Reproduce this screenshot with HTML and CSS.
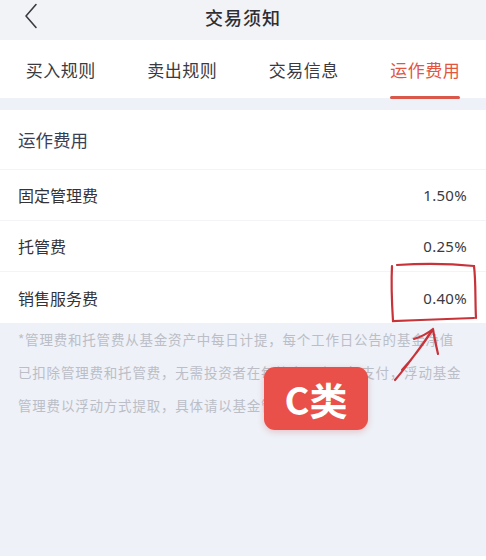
FILE: index.html
```html
<!DOCTYPE html>
<html lang="zh">
<head>
<meta charset="utf-8">
<link rel="stylesheet" href="styles.css">
</head>
<body>
<div class="page">
  <header class="nav">
    <span class="back">
      <svg width="14" height="26" viewBox="0 0 14 26"><path d="M12 1.5 L2 13 L12 24.5" fill="none" stroke="#3a3a40" stroke-width="1.6" stroke-linecap="round" stroke-linejoin="round"/></svg>
    </span>
    <h1 class="title">交易须知</h1>
    <span></span>
  </header>
  <nav class="tabs">
    <div class="tab">买入规则</div>
    <div class="tab">卖出规则</div>
    <div class="tab">交易信息</div>
    <div class="tab active">运作费用</div>
  </nav>
  <section class="card">
    <div class="card-head">运作费用</div>
    <div class="row"><span>固定管理费</span><span class="val">1.50%</span></div>
    <div class="row"><span>托管费</span><span class="val">0.25%</span></div>
    <div class="row"><span>销售服务费</span><span class="val">0.40%</span></div>
  </section>
  <p class="note">*管理费和托管费从基金资产中每日计提，每个工作日公告的基金净值已扣除管理费和托管费，无需投资者在每笔交易中另行支付，浮动基金管理费以浮动方式提取，具体请以基金管理人公告为准。</p>
  <div class="bottom"></div>

  <svg class="mark" width="486" height="560" viewBox="0 0 486 560">
    <path d="M392 266 C391 285 392 305 393 321 C420 320 450 319 474 318 M397 265 C425 263 455 264 474 266 C476 282 475 300 476 318" fill="none" stroke="#c8333a" stroke-width="2.2" stroke-linecap="round"/>
    <path d="M395 380 C408 365 422 345 433 329 M402 370 C414 357 424 343 432 331 M433 329 C428 333 421 337 414 339 M433 329 C434 336 436 345 438 354" fill="none" stroke="#c8333a" stroke-width="2.2" stroke-linecap="round"/>
  </svg>
  <div class="badge">C类</div>
</div>
</body>
</html>
```
FILE: styles.css
```css
* { box-sizing: border-box; }
html, body { margin: 0; padding: 0; }
body {
  width: 486px;
  height: 560px;
  overflow: hidden;
  background: #eef1f8;
  font-family: "Noto Sans CJK SC", "Noto Sans", sans-serif;
  color: #333338;
}
.page { position: relative; width: 486px; height: 560px; display: flex; flex-direction: column; }
.nav {
  height: 40px;
  background: #f2f3f7;
  display: grid;
  grid-template-columns: 1fr auto 1fr;
  align-items: start;
}
.back { padding: 3px 0 0 24px; display: flex; align-items: center; }
.title { margin: 0; font-size: 18px; font-weight: 500; color: #2e2e33; line-height: 34px; letter-spacing: 1px; }
.tabs {
  height: 58px;
  background: #ffffff;
  display: flex;
}
.tab {
  flex: 1;
  display: flex;
  align-items: center;
  justify-content: center;
  font-size: 17px;
  color: #3a3a40;
  letter-spacing: 0.5px;
  position: relative;
}
.tab.active { color: #e2553f; }
.tab.active::after {
  content: "";
  position: absolute;
  left: 50%;
  transform: translateX(-50%);
  bottom: -1px;
  width: 70px;
  height: 3px;
  border-radius: 2px;
  background: #d9584a;
}
.card {
  margin-top: 12px;
  background: #ffffff;
}
.card-head {
  height: 60px;
  display: flex;
  align-items: center;
  padding: 0 18px;
  font-size: 17.5px;
  color: #3b3f55;
  border-bottom: 1px solid #f3f4f7;
}
.row {
  height: 51px;
  display: flex;
  justify-content: space-between;
  align-items: center;
  padding: 0 19px 0 18px;
  font-size: 16px;
  border-bottom: 1px solid #f3f4f7;
}
.row:last-child { border-bottom: none; }
.val { font-family: "Noto Sans", sans-serif; font-size: 15px; color: #3a3a40; letter-spacing: 0.3px; }
.note {
  margin: 0;
  padding: 0 22px 0 18px;
  font-size: 13.5px;
  line-height: 33px;
  color: #bbbec6;
  letter-spacing: 0.8px;
  flex: 1;
}
.bottom { height: 4px; background: #ffffff; }
.mark { position: absolute; left: 0; top: 0; pointer-events: none; }
.badge {
  position: absolute;
  left: 264px;
  top: 367px;
  width: 104px;
  height: 63px;
  border-radius: 11px;
  background: #e9504a;
  color: #ffffff;
  font-size: 38px;
  font-weight: 700;
  line-height: 1;
  display: flex;
  align-items: center;
  justify-content: center;
  box-shadow: 0 2px 6px rgba(200, 60, 60, 0.25);
  font-family: "Noto Sans CJK SC", "Noto Sans", sans-serif;
}
```
